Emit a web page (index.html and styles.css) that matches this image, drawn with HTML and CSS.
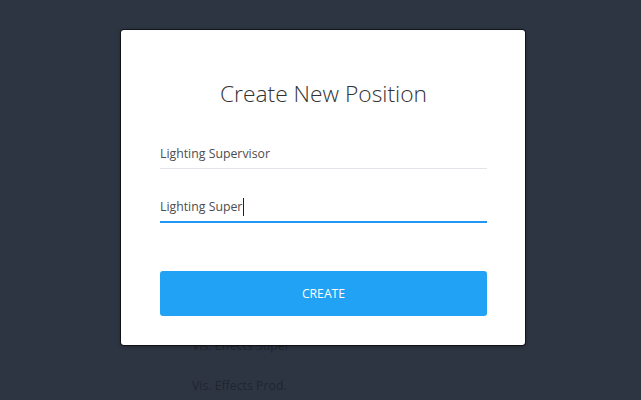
FILE: index.html
```html
<!DOCTYPE html>
<html>
<head>
<meta charset="utf-8">
<link rel="stylesheet" href="styles.css">
</head>
<body>
<ul class="bg-list">
  <li>Vis. Effects Super</li>
  <li>Vis. Effects Prod.</li>
</ul>
<div class="modal">
  <h1 class="title">Create New Position</h1>
  <div class="field">Lighting Supervisor</div>
  <div class="field field-active">Lighting Super<span class="caret"></span></div>
  <button class="btn">CREATE</button>
</div>
</body>
</html>
```
FILE: styles.css
```css
html, body {
  margin: 0;
  padding: 0;
}
body {
  width: 641px;
  height: 400px;
  overflow: hidden;
  background: #2d3542;
  font-family: "Open Sans", sans-serif;
  position: relative;
}
.bg-list {
  list-style: none;
  margin: 0;
  padding: 326px 0 0 192px;
}
.bg-list li {
  height: 40px;
  line-height: 40px;
  font-size: 12.3px;
  color: #1f2631;
}
.modal {
  position: absolute;
  left: 121px;
  top: 30px;
  width: 404px;
  height: 315px;
  box-sizing: border-box;
  padding: 49px 38px 29px 39px;
  background: #fff;
  border-radius: 3px;
  box-shadow: 0 0 0 1px rgba(0,0,0,0.55), 0 1px 4px rgba(0,0,0,0.4);
  display: flex;
  flex-direction: column;
}
.title {
  margin: 0 0 1px;
  font-size: 22.8px;
  line-height: 30px;
  font-weight: 300;
  color: #333;
  text-align: center;
}
.field {
  margin-top: 29px;
  height: 30px;
  line-height: 29px;
  font-size: 12.3px;
  color: #4d4d4d;
  border-bottom: 1px solid #e1e5ea;
  box-sizing: border-box;
}
.field-active {
  margin-top: 23px;
  height: 31px;
  border-bottom: 2px solid #2196f3;
  display: flex;
  align-items: center;
}
.caret {
  display: inline-block;
  width: 1px;
  height: 18px;
  background: #222;
  margin-left: 1px;
}
.btn {
  margin-top: 48px;
  height: 45px;
  border: none;
  border-radius: 3px;
  background: #22a2f4;
  color: #fff;
  font-family: "Open Sans", sans-serif;
  font-size: 12.2px;
  padding: 0;
}
```
